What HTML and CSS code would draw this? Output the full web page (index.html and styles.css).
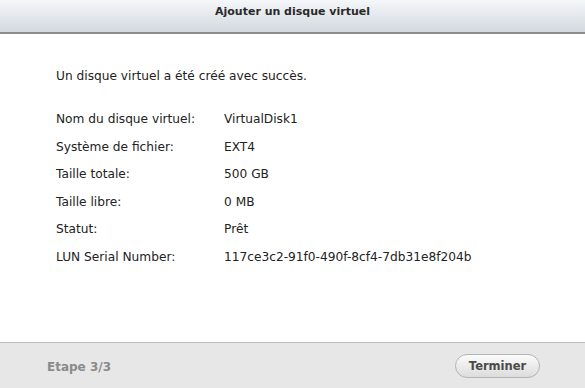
FILE: index.html
```html
<!DOCTYPE html>
<html>
<head>
<meta charset="utf-8">
<link rel="stylesheet" href="styles.css">
</head>
<body>
<div class="dialog">
  <div class="titlebar">Ajouter un disque virtuel</div>
  <div class="content">
    <p class="message">Un disque virtuel a été créé avec succès.</p>
    <div class="info">
      <div class="label">Nom du disque virtuel:</div><div class="value">VirtualDisk1</div>
      <div class="label">Système de fichier:</div><div class="value">EXT4</div>
      <div class="label">Taille totale:</div><div class="value">500 GB</div>
      <div class="label">Taille libre:</div><div class="value">0 MB</div>
      <div class="label">Statut:</div><div class="value">Prêt</div>
      <div class="label">LUN Serial Number:</div><div class="value">117ce3c2-91f0-490f-8cf4-7db31e8f204b</div>
    </div>
  </div>
  <div class="footer">
    <span class="step">Etape 3/3</span>
    <button class="btn">Terminer</button>
  </div>
</div>
</body>
</html>
```
FILE: styles.css
```css
html, body {
  margin: 0;
  padding: 0;
  width: 585px;
  height: 388px;
  overflow: hidden;
  background: #ffffff;
  font-family: "DejaVu Sans", Verdana, sans-serif;
}
.dialog {
  display: flex;
  flex-direction: column;
  height: 388px;
}
.titlebar {
  height: 34px;
  box-sizing: border-box;
  padding-top: 4px;
  text-align: center;
  font-size: 11px;
  font-weight: bold;
  color: #2a2a2a;
  background: linear-gradient(#f5f7f9, #d3d9df);
  border-bottom: 2px solid #8c8c8c;
  line-height: 15px;
}
.content {
  flex: 1;
  padding: 35px 0 0 56px;
  color: #222;
  font-size: 12.2px;
}
.message {
  margin: 0 0 29px 0;
  line-height: 14px;
}
.info {
  display: grid;
  grid-template-columns: 168px auto;
  row-gap: 13.6px;
  line-height: 14px;
}
.footer {
  height: 46px;
  box-sizing: border-box;
  background: #e7e7e7;
  border-top: 1px solid #bdbdbd;
  display: flex;
  align-items: center;
  justify-content: space-between;
  padding: 0 45px 0 47px;
}
.step {
  font-size: 12px;
  font-weight: bold;
  color: #8a8a8a;
  padding-top: 2px;
}
.btn {
  width: 85px;
  height: 24px;
  border-radius: 12px;
  border: 1px solid #b5b5b5;
  background: linear-gradient(#fbfbfb, #dcdcdc);
  font-family: "DejaVu Sans", Verdana, sans-serif;
  font-size: 11.5px;
  font-weight: bold;
  color: #4a4a4a;
  padding: 0;
}
```
